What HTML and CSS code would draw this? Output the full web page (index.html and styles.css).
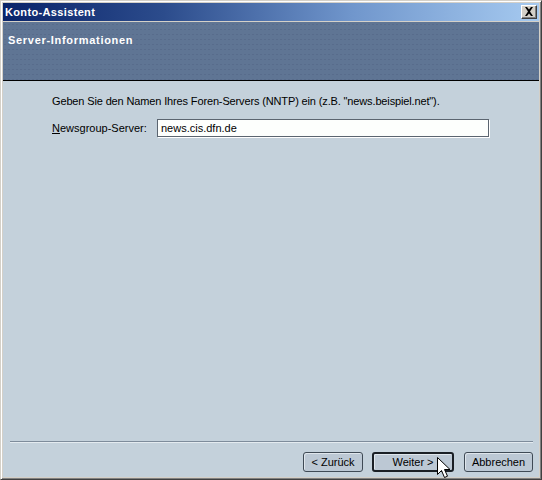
FILE: index.html
```html
<!DOCTYPE html>
<html lang="de">
<head>
<meta charset="utf-8">
<title>Konto-Assistent</title>
<link rel="stylesheet" href="styles.css">
</head>
<body>
<div class="window">
  <div class="titlebar">
    <span class="title">Konto-Assistent</span>
    <span class="close"><svg width="10" height="9" viewBox="0 0 10 9"><path d="M1 0h2l2 2.5L7 0h2L6 4.5 9 9H7L5 6.5 3 9H1l3-4.5z" fill="#000"/></svg></span>
  </div>
  <div class="content">
    <div class="banner"><span class="banner-title">Server-Informationen</span></div>
    <div class="page">
      <p class="intro">Geben Sie den Namen Ihres Foren-Servers (NNTP) ein (z.B. "news.beispiel.net").</p>
      <div class="row">
        <label class="label" for="srv"><u>N</u>ewsgroup-Server:</label>
        <input class="field" id="srv" type="text" value="news.cis.dfn.de">
      </div>
    </div>
    <div class="footer">
      <div class="sep"></div>
      <div class="buttons">
        <button class="btn back">&lt; Zurück</button>
        <button class="btn next default">Weiter &gt;</button>
        <button class="btn cancel">Abbrechen</button>
      </div>
      <svg class="cursor" width="14" height="22" viewBox="0 0 14 22"><path d="M0.5 0.5v17l4-4 3 7 3-1.3-3-6.7h5.5z" fill="#fff" stroke="#000" stroke-width="1"/></svg>
    </div>
  </div>
</div>
</body>
</html>
```
FILE: styles.css
```css
* { box-sizing: border-box; }
html, body { margin: 0; padding: 0; }
body {
  font-family: "Liberation Sans", Arial, sans-serif;
  font-size: 11px;
  color: #000;
  background: #d4d0c8;
}
.window {
  width: 542px;
  height: 480px;
  background: #d4d0c8;
  border: 1px solid;
  border-color: #d4d0c8 #404040 #404040 #d4d0c8;
  box-shadow: inset 1px 1px #ffffff, inset -1px -1px #808080;
  padding: 2px;
  display: flex;
  flex-direction: column;
}
.titlebar {
  height: 18px;
  flex: none;
  display: flex;
  align-items: center;
  justify-content: space-between;
  padding: 0 2px 0 2px;
  background: linear-gradient(to right, #0a246a 0%, #2c4c8c 30%, #7096cc 65%, #a6caf0 100%);
  margin-bottom: 1px;
}
.title {
  color: #fff;
  font-weight: bold;
  font-size: 11px;
  letter-spacing: 0.35px;
}
.close {
  width: 16px;
  height: 14px;
  background: #d4d0c8;
  border: 1px solid;
  border-color: #ffffff #404040 #404040 #ffffff;
  box-shadow: inset -1px -1px #808080;
  display: flex;
  align-items: center;
  justify-content: center;
  padding-bottom: 1px;
}
.content {
  flex: 1;
  display: flex;
  flex-direction: column;
  background: #c4d1db;
  position: relative;
}
.banner {
  height: 59px;
  flex: none;
  background-color: #5f7594;
  background-image: radial-gradient(circle, #586c8c 0.8px, transparent 1px);
  background-size: 4px 5px;
  border-bottom: 1px solid #000;
  padding: 12px 0 0 5px;
}
.banner-title {
  color: #fff;
  font-weight: bold;
  font-size: 11px;
  letter-spacing: 0.7px;
}
.page {
  padding: 14px 0 0 49px;
}
.intro {
  margin: 0;
  line-height: 13px;
  letter-spacing: -0.14px;
}
.row {
  display: flex;
  align-items: center;
  margin-top: 11px;
}
.label {
  width: 105px;
  flex: none;
}
.label u { text-decoration: underline; }
.field {
  width: 332px;
  height: 18px;
  font-family: "Liberation Sans", Arial, sans-serif;
  font-size: 11px;
  padding: 0 0 0 3px;
  background: #fdfffd;
  border: 1px solid #5b6570;
  box-shadow: 1px 1px 0 #ffffff;
  color: #000;
}
.footer {
  margin-top: auto;
  position: relative;
}
.sep {
  margin: 0 6px 0 7px;
  height: 2px;
  border-top: 1px solid #7e8c9b;
  border-bottom: 1px solid #e4ebf0;
}
.buttons {
  display: flex;
  justify-content: flex-end;
  gap: 9px;
  padding: 9px 6px 5px 0;
}
.btn {
  height: 20px;
  font-family: "Liberation Sans", Arial, sans-serif;
  font-size: 11px;
  color: #000;
  background: #bcc8d4;
  border: 1px solid #3f4a55;
  border-radius: 3px;
  box-shadow: inset 1px 1px #dfe6ec;
  padding: 0;
}
.back { width: 60px; }
.next { width: 82px; }
.cancel { width: 69px; margin-left: 1px; }
.default {
  border: 2px solid #1a1f25;
  background: #bcc8d4;
  box-shadow: inset 1px 1px #dfe6ec;
}
.cursor {
  position: absolute;
  left: 434px;
  top: 16px;
}
```
